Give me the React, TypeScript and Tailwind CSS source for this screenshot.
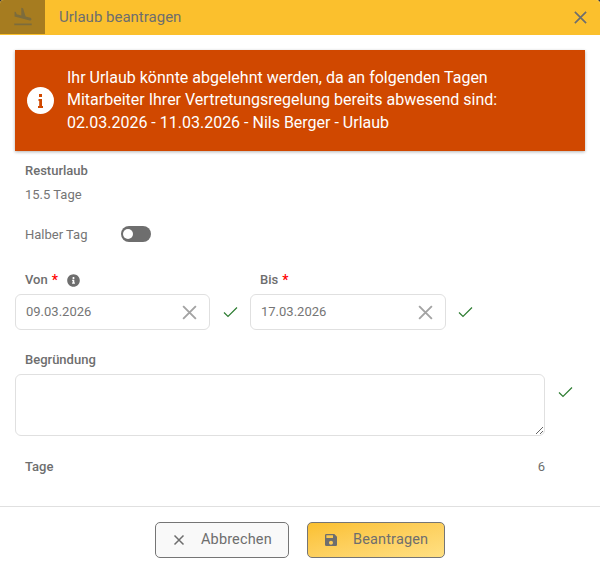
import { MdFlightLand, MdSave } from "react-icons/md";
import { FaInfoCircle } from "react-icons/fa";

const CheckMark = () => (
  <svg width="15" height="12" viewBox="0 0 15 12" className="shrink-0 text-[#2e7d32]">
    <path d="M1 6.5 L5 10.5 L14 1.5" fill="none" stroke="currentColor" strokeWidth="1.2" />
  </svg>
);

const Cross = ({ size, width, className }: { size: number; width: number; className: string }) => (
  <svg width={size} height={size} viewBox="0 0 16 16" className={className}>
    <path d="M2 2 L14 14 M14 2 L2 14" fill="none" stroke="currentColor" strokeWidth={width} />
  </svg>
);

const Required = () => <span className="text-[14px] text-[#f00]">*</span>;

function DateField({ value, className }: { value: string; className: string }) {
  return (
    <div className={`flex h-[36px] items-center justify-between rounded-[6px] border border-[#e0e0e0] pl-[10px] pr-[11px] ${className}`}>
      <span className="text-[13px] text-[#757575]">{value}</span>
      <Cross size={17} width={1.8} className="text-[#a3a3a3]" />
    </div>
  );
}

export default function App() {
  return (
    <div className="flex h-[583px] w-[600px] flex-col overflow-hidden bg-[#3a3a3a] font-['Roboto',sans-serif] text-[#6e6e6e]">
      <div className="flex h-full flex-col rounded-t-[4px] bg-white">
        <header className="flex h-[35px] shrink-0 items-center overflow-hidden rounded-t-[4px] bg-[#fbc02d]">
          <div className="flex h-[34px] w-[45px] shrink-0 items-center justify-center self-start bg-[#a67c20]">
            <MdFlightLand size={22} className="text-[#7c6c3c]" />
          </div>
          <h1 className="ml-[14px] flex-1 text-[15px] font-normal">Urlaub beantragen</h1>
          <Cross size={15} width={1.8} className="mr-[12px] text-[#6e6e6e]" />
        </header>

        <main className="flex flex-1 flex-col px-[15px] pt-[15px]">
          <div className="flex h-[101px] items-center bg-[#d04800] pl-[12px] text-[16px] leading-[22.4px] text-white shadow-[0_1px_3px_rgba(0,0,0,0.3)]">
            <div className="relative mr-[13px] flex h-[27px] w-[27px] shrink-0 items-center justify-center rounded-full bg-white">
              <svg width="5" height="15" viewBox="0 0 5 15" className="text-[#d04800]">
                <path d="M1 1h3v3H1z M0.5 6h3.5v7h1v2H0v-2h1.2V8H0.5z" fill="currentColor" />
              </svg>
            </div>
            <p>
              Ihr Urlaub könnte abgelehnt werden, da an folgenden Tagen
              <br />
              Mitarbeiter Ihrer Vertretungsregelung bereits abwesend sind:
              <br />
              02.03.2026 - 11.03.2026 - Nils Berger - Urlaub
            </p>
          </div>

          <section className="px-[10px] pt-[12px] text-[13px]">
            <div className="font-medium leading-[16px]">Resturlaub</div>
            <div className="mt-[8px] leading-[16px] text-[#757575]">15.5 Tage</div>
            <div className="mt-[20px] flex h-[24px] items-center">
              <span className="w-[96px] text-[#757575]">Halber Tag</span>
              <span className="mb-[2px] flex h-[16px] w-[30px] items-center rounded-full bg-[#6e6e6e] pl-[2px]">
                <span className="h-[10px] w-[10px] rounded-full bg-white" />
              </span>
            </div>
          </section>

          <section className="mt-[24px] flex text-[13px]">
            <div className="w-[235px]">
              <div className="flex h-[18px] items-center pl-[10px] font-medium">
                <span>Von</span>
                <span className="ml-[4px]"><Required /></span>
                <FaInfoCircle size={13} className="ml-[9px] text-[#6e6e6e]" />
              </div>
              <div className="mt-[5px] flex items-center">
                <DateField value="09.03.2026" className="w-[195px]" />
                <span className="ml-[13px]"><CheckMark /></span>
              </div>
            </div>
            <div>
              <div className="flex h-[18px] items-center pl-[10px] font-medium">
                <span>Bis</span>
                <span className="ml-[4px]"><Required /></span>
              </div>
              <div className="mt-[5px] flex items-center">
                <DateField value="17.03.2026" className="w-[196px]" />
                <span className="ml-[12px]"><CheckMark /></span>
              </div>
            </div>
          </section>

          <section className="mt-[21px]">
            <label className="block pl-[10px] text-[13px] font-medium leading-[18px]">Begründung</label>
            <div className="mt-[5px] flex items-start">
              <textarea className="block h-[62px] w-[530px] rounded-[6px] border border-[#e0e0e0] outline-none" />
              <span className="ml-[13px] mt-[12px]"><CheckMark /></span>
            </div>
          </section>

          <div className="mt-[22px] flex w-[530px] justify-between pl-[10px] text-[13px] leading-[18px]">
            <span className="font-medium">Tage</span>
            <span>6</span>
          </div>
        </main>

        <footer className="flex h-[77px] shrink-0 items-start justify-center gap-[18px] border-t border-[#e0e0e0] pt-[15px] text-[14.5px] tracking-[0.15px]">
          <button className="flex h-[36px] w-[134px] items-center rounded-[5px] border border-[#757575] bg-[#f9f9f9] pl-[17px]">
            <Cross size={12} width={2} className="text-[#6e6e6e]" />
            <span className="ml-[16px]">Abbrechen</span>
          </button>
          <button className="flex h-[36px] w-[138px] items-center rounded-[5px] border border-[#757575] bg-gradient-to-br from-[#fbc02d] to-[#ffe082] pl-[15px]">
            <MdSave size={16} className="text-[#6e6e6e]" />
            <span className="ml-[14px]">Beantragen</span>
          </button>
        </footer>
      </div>
    </div>
  );
}
